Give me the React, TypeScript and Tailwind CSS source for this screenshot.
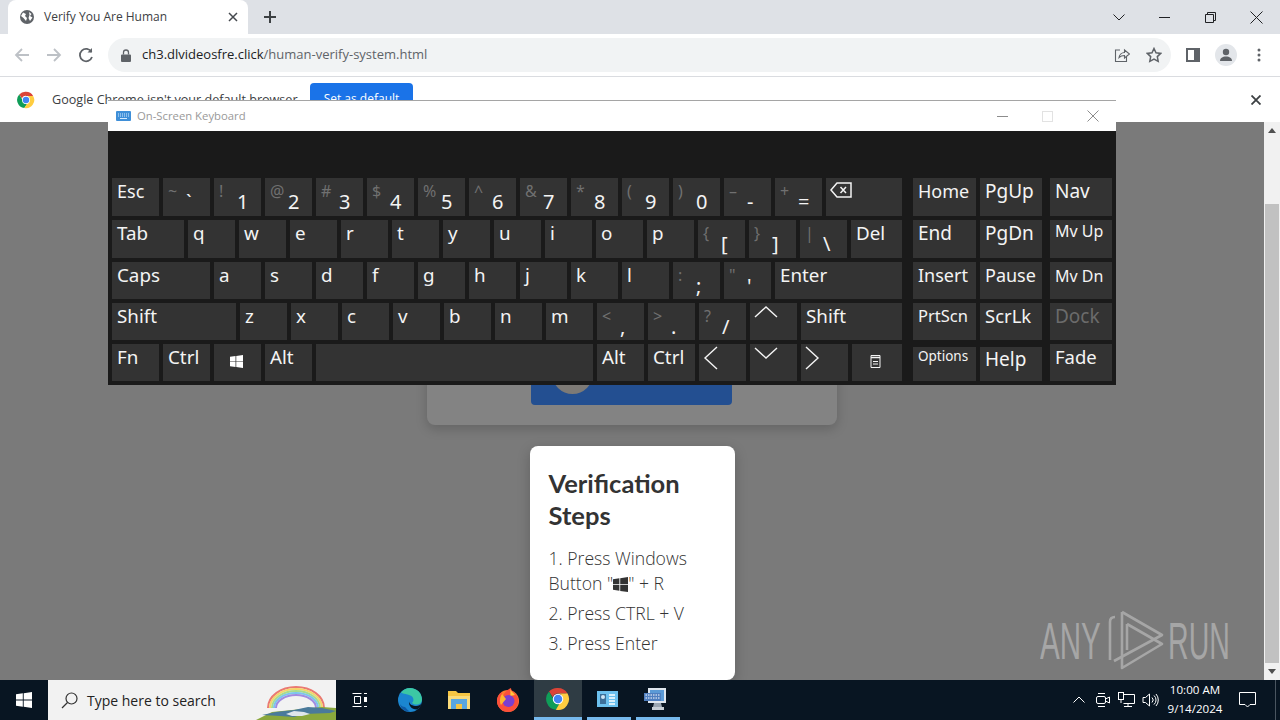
import React from 'react';

const keyFont = "font-['Noto_Sans',sans-serif]";

const WinLogo = ({ className }: { className: string }) => (
  <svg viewBox="0 0 16 16" className={className} fill="currentColor">
    <path d="M0 2.300 6.800 1.300v6.300H0zM7.700 1.200 16 0v7.600H7.700zM0 8.400h6.800v6.300L0 13.700zM7.700 8.400H16V16l-8.300-1.200z" />
  </svg>
);

const ChromeLogo = ({ size }: { size: number }) => (
  <svg width={size} height={size} viewBox="0 0 48 48">
    <path fill="#db4437" d="M24 2a22 22 0 0 1 19 11H24a11 11 0 0 0-10.500 7.500L6 9a22 22 0 0 1 18-7z" />
    <path fill="#0f9d58" d="M6 9l9.500 16.500A11 11 0 0 0 27 34.600L19.600 45.600A22 22 0 0 1 6 9z" />
    <path fill="#ffcd40" d="M43 13a22 22 0 0 1-23.400 32.600L29.500 29A11 11 0 0 0 31 16z" />
    <path fill="#ffcd40" d="M43 13H24a11 11 0 0 1 7 3l-1.500 13z" />
    <circle cx="24" cy="24" r="10.500" fill="#fff" />
    <circle cx="24" cy="24" r="8.500" fill="#4285f4" />
  </svg>
);

type KeyProps = {
  w: string;
  label?: string;
  sub?: string;
  h?: string;
  text?: string;
  dim?: boolean;
  children?: React.ReactNode;
};

const Key = ({ w, label, sub, h = 'h-full', text = 'text-[18.8px] leading-[26px]', dim, children }: KeyProps) => (
  <div className={`${w} ${h} bg-[#333333] shrink-0 pl-[5px] ${dim ? 'text-[#6b6b6b]' : 'text-[#f4f4f4]'}`}>
    {sub !== undefined ? (
      <div className="flex flex-col">
        <span className="text-[16px] leading-5 pt-[3px] text-[#707070]">{sub}</span>
        <span className="text-[20px] leading-6 pl-[18px] -mt-[11px]">{label}</span>
      </div>
    ) : children ? (
      children
    ) : (
      <span className={`block whitespace-nowrap ${text}`}>{label}</span>
    )}
  </div>
);

const Chevron = ({ d, className }: { d: string; className: string }) => (
  <svg viewBox="0 0 24 24" className={className} fill="none" stroke="#f4f4f4" strokeWidth="1.400">
    <path d={d} />
  </svg>
);

const numberRow = [
  ['~', '`'], ['!', '1'], ['@', '2'], ['#', '3'], ['$', '4'], ['%', '5'], ['^', '6'],
  ['&', '7'], ['*', '8'], ['(', '9'], [')', '0'], ['–', '-'], ['+', '='],
];

const OnScreenKeyboard = () => (
  <div className={`absolute left-[108px] top-[100px] w-[1008px] h-[285px] flex flex-col ${keyFont}`}>
    {/* title bar */}
    <div className="h-[31px] bg-white border-t border-[#a5a5a5] flex items-center pl-2 pr-[17px] shrink-0">
      <svg width="15" height="10" viewBox="0 0 15 10" className="shrink-0">
        <rect width="15" height="10" rx="1" fill="#3f8fd8" />
        <path d="M2 3h11M2 5h11" stroke="#d7ecff" strokeWidth="1" strokeDasharray="1 1" />
        <path d="M4 7.500h7" stroke="#d7ecff" strokeWidth="1" />
      </svg>
      <span className="ml-[6px] text-[11.3px] text-[#999999] font-['Open_Sans',sans-serif]">On-Screen Keyboard</span>
      <div className="ml-auto flex items-center gap-[34px]">
        <svg width="11" height="11" viewBox="0 0 11 11" stroke="#8c8c8c" fill="none"><path d="M0 5.500h11" /></svg>
        <svg width="11" height="11" viewBox="0 0 11 11" stroke="#e2e2e2" fill="none"><rect x=".5" y=".5" width="10" height="10" /></svg>
        <svg width="12" height="12" viewBox="0 0 12 12" stroke="#8c8c8c" fill="none"><path d="M.5.500l11 11M11.500.500l-11 11" /></svg>
      </div>
    </div>

    <div className="flex-1 bg-[#1a1a1a] pl-1 pt-[47px] flex gap-[11px]">
      {/* main block */}
      <div className="w-[790px] flex flex-col gap-[4px]">
        <div className="h-[38px] flex gap-1">
          <Key w="w-[47px]" label="Esc" text="text-[18px] leading-[26px]" />
          {numberRow.map(([s, l]) => (
            <Key key={l} w="w-[47px]" sub={s} label={l} />
          ))}
          <Key w="w-[76px]">
            <svg width="22" height="16" viewBox="0 0 22 16" fill="none" stroke="#f4f4f4" strokeWidth="1.500" className="mt-[4px] -ml-[1px]">
              <path d="M7 1h14v14H7L1 8z" />
              <path d="M10.500 5l5.500 6M16 5l-5.500 6" />
            </svg>
          </Key>
        </div>
        <div className="h-[38px] flex gap-1">
          <Key w="w-[72px]" label="Tab" />
          {'qwertyuiop'.split('').map((c) => (
            <Key key={c} w="w-[47px]" label={c} />
          ))}
          <Key w="w-[47px]" sub="{" label="[" />
          <Key w="w-[47px]" sub="}" label="]" />
          <Key w="w-[47px]" sub="|" label="\" />
          <Key w="w-[51px]" label="Del" />
        </div>
        <div className="h-[37px] flex gap-1">
          <Key w="w-[98px]" label="Caps" />
          {'asdfghjkl'.split('').map((c) => (
            <Key key={c} w="w-[47px]" label={c} />
          ))}
          <Key w="w-[47px]" sub=":" label=";" />
          <Key w="w-[47px]" sub={'"'} label="'" />
          <Key w="w-[127px]" label="Enter" />
        </div>
        <div className="h-[37px] flex gap-1">
          <Key w="w-[124px]" label="Shift" />
          {'zxcvbnm'.split('').map((c) => (
            <Key key={c} w="w-[47px]" label={c} />
          ))}
          <Key w="w-[47px]" sub="<" label="," />
          <Key w="w-[47px]" sub=">" label="." />
          <Key w="w-[47px]" sub="?" label="/" />
          <Key w="w-[47px]">
            <Chevron d="M1 13 12 3l11 10" className="w-6 h-6 mt-[1px] -ml-[1px]" />
          </Key>
          <Key w="w-[101px]" label="Shift" />
        </div>
        <div className="h-[37px] flex gap-1">
          <Key w="w-[47px]" label="Fn" />
          <Key w="w-[47px]" label="Ctrl" />
          <Key w="w-[47px]">
            <WinLogo className="w-[13px] h-[13px] ml-[11px] mt-[11px] text-white" />
          </Key>
          <Key w="w-[47px]" label="Alt" />
          <Key w="w-[277px]" />
          <Key w="w-[47px]" label="Alt" />
          <Key w="w-[47px]" label="Ctrl" />
          <Key w="w-[47px]">
            <Chevron d="M16 1 4 12l12 11" className="w-6 h-6 mt-[2px] -ml-[3px]" />
          </Key>
          <Key w="w-[47px]">
            <Chevron d="M1 4l11 10L23 4" className="w-6 h-6 mt-0 -ml-[1px]" />
          </Key>
          <Key w="w-[47px]">
            <Chevron d="M5 1l12 11L5 23" className="w-6 h-6 mt-[2px] -ml-[5px]" />
          </Key>
          <Key w="w-[50px]">
            <svg width="11" height="13" viewBox="0 0 11 13" fill="none" stroke="#f4f4f4" className="ml-[13px] mt-[11px]">
              <path d="M1 .500h9v12H1z" />
              <path d="M1 2.500h9" strokeWidth="1.500" />
              <path d="M3 6.500h5M3 9h5" />
            </svg>
          </Key>
        </div>
      </div>

      {/* nav block */}
      <div className="flex gap-1">
        <div className="w-[63px] flex flex-col gap-[4px]">
          <div className="h-[38px]"><Key w="w-full" label="Home" text="text-[18px] leading-[26px]" /></div>
          <div className="h-[38px]"><Key w="w-full" label="End" text="text-[19px] leading-[26px]" /></div>
          <div className="h-[37px]"><Key w="w-full" label="Insert" text="text-[18px] leading-[26px]" /></div>
          <div className="h-[37px]"><Key w="w-full" label="PrtScn" text="text-[16.5px] leading-[26px]" /></div>
          <div className="h-[37px] flex flex-col justify-end"><Key w="w-full" h="h-[34px]" label="Options" text="text-[13.5px] leading-[18px]" /></div>
        </div>
        <div className="w-[62px] flex flex-col gap-[4px]">
          <div className="h-[38px]"><Key w="w-full" label="PgUp" text="text-[19px] leading-[26px]" /></div>
          <div className="h-[38px]"><Key w="w-full" label="PgDn" text="text-[19px] leading-[26px]" /></div>
          <div className="h-[37px]"><Key w="w-full" label="Pause" text="text-[18px] leading-[26px]" /></div>
          <div className="h-[37px]"><Key w="w-full" label="ScrLk" text="text-[18.5px] leading-[26px]" /></div>
          <div className="h-[37px] flex flex-col justify-end"><Key w="w-full" h="h-[34px]" label="Help" text="text-[19px] leading-[25px]" /></div>
        </div>
        <div className="w-[62px] flex flex-col gap-[4px] ml-1">
          <div className="h-[38px]"><Key w="w-full" label="Nav" text="text-[19px] leading-[26px]" /></div>
          <div className="h-[38px]"><Key w="w-full" label="Mv Up" text="text-[16px] leading-[22px]" /></div>
          <div className="h-[37px]"><Key w="w-full" label="Mv Dn" text="text-[16px] leading-[28px]" /></div>
          <div className="h-[37px]"><Key w="w-full" label="Dock" dim text="text-[19px] leading-[26px]" /></div>
          <div className="h-[37px]"><Key w="w-full" label="Fade" text="text-[18.5px] leading-[26px]" /></div>
        </div>
      </div>
    </div>
  </div>
);

const TabStrip = () => (
  <div className="h-[34px] bg-[#dee1e6] flex items-end shrink-0 relative">
    <div className="ml-2 w-[240px] h-[34px] bg-white rounded-t-lg flex items-center pl-[12px] pr-[10px]">
      <svg width="14" height="14" viewBox="0 0 14 14" className="shrink-0">
        <circle cx="7" cy="7" r="7" fill="#5f6368" />
        <path d="M3 2.500 6 4 5 6 7 8 6 11 3.500 8 1 6zM9 2l2.500 2L10 6l2.500 1.500L10 11 8.500 8 9.500 5z" fill="#fff" />
      </svg>
      <span className="ml-[10px] text-[12px] text-[#3c4043] font-['Open_Sans',sans-serif]">Verify You Are Human</span>
      <svg width="10" height="10" viewBox="0 0 10 10" className="ml-auto" stroke="#45494e" strokeWidth="1.500"><path d="M1 1l8 8M9 1l-8 8" /></svg>
    </div>
    <svg width="12" height="12" viewBox="0 0 12 12" className="ml-4 mb-[11px]" stroke="#3c4043" strokeWidth="2"><path d="M6 0v12M0 6h12" /></svg>
    <div className="ml-auto flex items-center h-full pr-[17px] gap-[34px]">
      <svg width="12" height="12" viewBox="0 0 12 12" fill="none" stroke="#202124"><path d="M.5 3.500 6 9l5.500-5.500" /></svg>
      <svg width="11" height="11" viewBox="0 0 11 11" fill="none" stroke="#202124"><path d="M0 5.500h11" /></svg>
      <svg width="11" height="11" viewBox="0 0 11 11" fill="none" stroke="#202124" className="ml-[1px]"><path d="M.5 2.500h8v8h-8zM2.500 2.500v-2h8v8h-2" /></svg>
      <svg width="13" height="13" viewBox="0 0 13 13" fill="none" stroke="#202124"><path d="M.5.500l12 12M12.500.500l-12 12" /></svg>
    </div>
  </div>
);

const Toolbar = () => (
  <div className="h-[43px] bg-white border-b border-[#dadce0] flex items-center shrink-0">
    <svg width="16" height="16" viewBox="0 0 16 16" fill="none" stroke="#bdc1c6" strokeWidth="1.800" className="ml-[14px]"><path d="M15 8H2M8 2 2 8l6 6" /></svg>
    <svg width="16" height="16" viewBox="0 0 16 16" fill="none" stroke="#bdc1c6" strokeWidth="1.800" className="ml-[16px]"><path d="M1 8h13M8 2l6 6-6 6" /></svg>
    <svg width="16" height="16" viewBox="0 0 16 16" fill="none" stroke="#5f6368" strokeWidth="1.800" className="ml-[16px]"><path d="M13.500 5A6.200 6.200 0 1 0 14 10" /><path d="M14 1v4.500H9.500" fill="#5f6368" stroke="none" /></svg>
    <div className="ml-[14px] w-[1063px] h-[34px] bg-[#f1f3f4] rounded-full flex items-center pl-[13px] pr-[9px]">
      <svg width="10" height="13" viewBox="0 0 10 13" className="shrink-0"><path d="M1 5.500h8a1 1 0 0 1 1 1V12a1 1 0 0 1-1 1H1a1 1 0 0 1-1-1V6.500a1 1 0 0 1 1-1z" fill="#5f6368" /><path d="M2.500 5.500V3.500a2.500 2.500 0 0 1 5 0v2" fill="none" stroke="#5f6368" strokeWidth="1.300" /></svg>
      <span className="ml-[11px] text-[13px] text-[#202124] font-['Open_Sans',sans-serif]">
        ch3.dlvideosfre.click<span className="text-[#5f6368]">/human-verify-system.html</span>
      </span>
      <svg width="16" height="16" viewBox="0 0 16 16" fill="none" stroke="#5f6368" strokeWidth="1.100" className="ml-auto"><path d="M6 3H1.500v11.500h11V10" /><path d="M5 10.500C5.500 7.500 8 5.500 10.500 5.500V3l5 4-5 4V8.500C8.500 8.500 6.500 9 5 10.500z" /></svg>
      <svg width="16" height="16" viewBox="0 0 16 16" fill="none" stroke="#5f6368" strokeWidth="1.500" className="ml-[16px]"><path d="m8 1.500 2 4.300 4.700.6-3.400 3.200.9 4.700L8 12l-4.200 2.300.9-4.700L1.300 6.400 6 5.800z" /></svg>
    </div>
    <svg width="14" height="14" viewBox="0 0 14 14" className="ml-[15px]"><path d="M0 0h14v14H0zM2 2v10h6V2z" fill="#5f6368" fillRule="evenodd" /></svg>
    <div className="ml-[15px] w-[22px] h-[22px] rounded-full bg-[#e3e6ea] flex items-center justify-center">
      <svg width="14" height="14" viewBox="0 0 14 14" fill="#5f6368"><circle cx="7" cy="4" r="3.200" /><path d="M1 13c0-3 2.500-4.500 6-4.500s6 1.500 6 4.500z" /></svg>
    </div>
    <svg width="4" height="14" viewBox="0 0 4 14" fill="#5f6368" className="ml-[20px]"><circle cx="2" cy="2" r="1.500" /><circle cx="2" cy="7" r="1.500" /><circle cx="2" cy="12" r="1.500" /></svg>
  </div>
);

const InfoBar = () => (
  <div className="h-[45px] bg-white flex items-center shrink-0 pl-[17px] pr-[19px] font-['Open_Sans',sans-serif]">
    <ChromeLogo size={18} />
    <span className="ml-[17px] mt-[1px] w-[246px] whitespace-nowrap text-[12.6px] text-[#3c4043]">Google Chrome isn't your default browser</span>
    <div className="ml-[12px] w-[103px] h-[32px] bg-[#1a73e8] rounded text-white text-[12px] flex items-center justify-center self-start mt-[6px]">Set as default</div>
    <svg width="10" height="10" viewBox="0 0 10 10" className="ml-auto" stroke="#3c4043" strokeWidth="1.800"><path d="M.5.500l9 9M9.500.500l-9 9" /></svg>
  </div>
);

const VerifyPage = () => (
  <div className="flex-1 flex min-h-0">
    <div className="flex-1 bg-[#7a7a7a] flex flex-col items-center relative overflow-hidden">
      <div className="w-[410px] h-[303px] bg-[#838383] rounded-b-lg shadow-[0_4px_12px_rgba(0,0,0,0.18)] flex flex-col justify-end items-center pb-5 shrink-0">
        <div className="w-[201px] h-[60px] bg-[#234f91] rounded-b -ml-[1px]">
          <div className="w-[41px] h-[49px] bg-[#7d7a76] rounded-b-full ml-[21px]" />
        </div>
      </div>
      <div className="w-[205px] h-[234px] mt-[21px] shrink-0 bg-white rounded-lg shadow-[0_4px_14px_rgba(0,0,0,0.2)] px-[19px] pt-[21px] font-['Open_Sans',sans-serif] text-[#333]">
        <h2 className="text-[25.5px] leading-8 font-bold font-['Lato',sans-serif]">Verification Steps</h2>
        <ol className="mt-[15px] text-[17.6px] font-light">
          <li className="leading-[25px]">
            1. Press Windows Button "<WinLogo className="inline w-[15px] h-[15px] align-[-2px] text-[#333]" />" + R
          </li>
          <li className="leading-[25px] mt-[5px]">2. Press CTRL + V</li>
          <li className="leading-[25px] mt-[5px]">3. Press Enter</li>
        </ol>
      </div>
      {/* watermark */}
      <div className="absolute left-[1040px] top-[488px] flex items-center text-[#a6a6a6] font-['Liberation_Sans',sans-serif]">
        <span className="text-[51px] leading-none w-[60px] origin-left scale-x-[0.58] block">ANY</span>
        <svg width="70" height="62" viewBox="0 0 70 62" fill="none" stroke="#a6a6a6" strokeWidth="2.600" strokeLinejoin="round" className="-mr-[2px]">
          <g transform="translate(0,-10)">
            <path d="M22 12 62 35 14 61" />
            <path d="M27 24 62 44 22 68V12" />
            <path d="M27 24V50" />
            <path d="M10 60V22Q10 17 15 17" />
          </g>
        </svg>
        <span className="text-[51px] leading-none w-[62px] origin-left scale-x-[0.56] block">RUN</span>
      </div>
    </div>
    {/* scrollbar */}
    <div className="w-4 bg-[#f1f1f1] flex flex-col items-center shrink-0">
      <div className="h-[16px] flex items-center justify-center"><div className="w-0 h-0 border-x-4 border-x-transparent border-b-[5px] border-b-[#505050]" /></div>
      <div className="h-[66px]" />
      <div className="w-[14px] flex-1 bg-[#c1c1c1]" />
      <div className="h-[17px] flex items-center justify-center"><div className="w-0 h-0 border-x-4 border-x-transparent border-t-[5px] border-t-[#505050]" /></div>
    </div>
  </div>
);

const Taskbar = () => (
  <div className="h-10 bg-[#081522] flex items-stretch shrink-0 font-['Open_Sans',sans-serif]">
    <div className="w-[48px] flex items-center justify-center">
      <WinLogo className="w-[16px] h-[16px] text-white" />
    </div>
    <div className="w-[288px] bg-[#f2f2f2] flex items-center pl-[13px] relative overflow-hidden">
      <svg width="17" height="17" viewBox="0 0 17 17" fill="none" stroke="#333" strokeWidth="1.200"><circle cx="10.500" cy="6.500" r="5.500" /><path d="M6.500 10.500 1 16" /></svg>
      <span className="ml-[9px] text-[14px] text-[#222]">Type here to search</span>
      <svg width="80" height="40" viewBox="0 0 80 40" fill="none" className="absolute right-0 top-0">
        <path d="M12 28A28 21 0 0 1 68 28" stroke="#ea7a72" strokeWidth="2" />
        <path d="M14 28A26 19 0 0 1 66 28" stroke="#f4d56a" strokeWidth="2" />
        <path d="M16 28A24 17 0 0 1 64 28" stroke="#a8dc8c" strokeWidth="2" />
        <path d="M18 28A22 15 0 0 1 62 28" stroke="#7cc4ec" strokeWidth="2" />
        <path d="M20 28A20 13 0 0 1 60 28" stroke="#a18be0" strokeWidth="2" />
        <path d="M0 40l16-8 50-5 14 1v12z" fill="#8aa83c" />
        <path d="M6 35l14-3 18-2 14-3 14 1 14 3-6 2-26 1-10 3-14-1z" fill="#4a7a9a" />
        <path d="M30 34l8-3 10 1 6 2-8 2-10 0z" fill="#dfe6ea" />
      </svg>
    </div>
    <div className="w-[48px] flex items-center justify-center">
      <svg width="16" height="16" viewBox="0 0 16 16" fill="none" stroke="#fff"><path d="M.5 1.500h9M.5 14.500h9M2.500 4.500h6v7h-6zM12 1.500h3M12 14.500h3" /><rect x="12" y="5" width="3" height="5" fill="#fff" stroke="none" /></svg>
    </div>
    <div className="w-[52px] flex items-center justify-center">
      <svg width="24" height="24" viewBox="0 0 24 24">
        <circle cx="12" cy="12" r="12" fill="#1b86d0" />
        <path d="M3 4.500C5 1.800 8.400 0 12 0c6.800 0 12 5 12 11.500 0 3-2.500 5-5.500 5-2.500 0-4-.8-4.500-1.800 2-1.200 2.200-5-1-7C9.500 6 5.500 6 3 4.500z" fill="#3cc8a4" />
        <path d="M23.500 15.500c-1 1.500-3 2.500-5 2.500-4 0-7-1.500-7.500-4.500-.5 3.500 2 8 8 8 2.500-1.500 4-3.500 4.500-6z" fill="#081522" />
        <path d="M12 23.500C7 24 3 21 2 16c1 2 3 3 5 3 2 2 3 3.500 5 4.500z" fill="#0f5aa5" />
      </svg>
    </div>
    <div className="w-[46px] flex items-center justify-center">
      <svg width="22" height="20" viewBox="0 0 22 20">
        <path d="M0 1h8l2 2h12v15H0z" fill="#f5c543" />
        <path d="M0 6h22v13H0z" fill="#fadb7a" />
        <path d="M3 9h16v10H3z" fill="#58a6e0" />
        <path d="M8 14h6v5H8z" fill="#f5c543" />
      </svg>
    </div>
    <div className="w-[52px] flex items-center justify-center">
      <svg width="24" height="24" viewBox="0 0 24 24">
        <circle cx="12" cy="13" r="11" fill="#ff7a2f" />
        <path d="M12 24a11 11 0 0 1-11-11C1 8 4 5 6 4c-.5 2 0 3 1 4 1-3 4-6 8-8 0 3 3 4 6 8 2 3 2 8-1 12a11 11 0 0 1-8 4z" fill="#fb4f3a" />
        <path d="M14 0c0 3 3 4 5 7l-5 1c1-3 0-5 0-8z" fill="#ffc83a" />
        <circle cx="12.500" cy="13" r="6" fill="#7a3fd0" />
        <path d="M6 6c-2 3-3 7-1 11l5-6z" fill="#ffb52e" />
      </svg>
    </div>
    <div className="w-[48px] bg-[#2f3c44] border-b-[3px] border-[#76b9ed] flex items-center justify-center">
      <ChromeLogo size={24} />
    </div>
    <div className="w-[44px] ml-[5px] border-b-[3px] border-[#76b9ed] flex items-center justify-center pr-[4px]">
      <svg width="21" height="16" viewBox="0 0 21 16">
        <path d="M0 0h21v16H0z" fill="#6cc0ee" />
        <path d="M3 3h6v10H3z" fill="#3c6f9a" />
        <circle cx="6" cy="6" r="2" fill="#cfe6f5" />
        <path d="M12 4h6M12 7h6M12 10h6M12 13h6" stroke="#fff" strokeWidth="1.300" />
      </svg>
    </div>
    <div className="w-[44px] ml-[5px] border-b-[3px] border-[#76b9ed] flex items-center justify-center pr-[4px]">
      <svg width="24" height="24" viewBox="0 0 24 24">
        <path d="M4 1h18v15H4z" fill="#dfe6ee" />
        <path d="M6 3h14v11H6z" fill="#5b9ad6" />
        <path d="M0 6h17v8H0z" fill="#4f7fc0" />
        <path d="M1.500 8h14M1.500 11h14" stroke="#fff" strokeDasharray="1.500 1" />
        <path d="M10 16h7l1 4h-9z" fill="#9aa5b1" />
        <path d="M8 20h12v3H8z" fill="#c7ced6" />
      </svg>
    </div>
    {/* tray */}
    <div className="ml-auto flex items-center text-white">
      <svg width="14" height="14" viewBox="0 0 14 14" fill="none" stroke="#fff"><path d="M1.500 9.500 7 4l5.500 5.500" /></svg>
      <svg width="16" height="16" viewBox="0 0 16 16" fill="none" stroke="#fff" className="ml-[9px]"><path d="M3 1.500h7M3 14.500h7" /><rect x="1.500" y="4.500" width="9" height="7" rx="1.500" /><path d="M10.500 7 14.500 5v6l-4-2" /></svg>
      <svg width="17" height="16" viewBox="0 0 17 16" fill="none" stroke="#fff" className="ml-[7px]"><path d="M5.500 2.500h11v9h-11" /><rect x=".5" y=".5" width="5" height="7" /><path d="M3 8v3M6 14.500h8M10 11.500v3" /></svg>
      <svg width="17" height="16" viewBox="0 0 17 16" fill="none" stroke="#fff" className="ml-[7px]"><path d="M1 5.500h2.500L7.500 2v12l-4-3.500H1z" /><path d="M10 5.500a3.500 3.500 0 0 1 0 5M12 3.500a6 6 0 0 1 0 9M14 2a9 9 0 0 1 0 12" /></svg>
      <div className="w-[60px] ml-[6px] -mt-[2px] flex flex-col items-center text-[11.6px] leading-[19px] whitespace-nowrap">
        <span>10:00 AM</span>
        <span>9/14/2024</span>
      </div>
      <svg width="17" height="16" viewBox="0 0 17 16" fill="none" stroke="#fff" className="ml-[14px] mr-[19px]"><path d="M.5.500h16v12h-5.500l-2.500 2.500-2.500-2.500H.5z" /></svg>
      <div className="w-px h-full bg-[#4a5560] mr-[4px]" />
    </div>
  </div>
);

export default function App() {
  return (
    <div className="w-[1280px] h-[720px] relative overflow-hidden flex flex-col bg-white">
      <TabStrip />
      <Toolbar />
      <InfoBar />
      <VerifyPage />
      <Taskbar />
      <OnScreenKeyboard />
    </div>
  );
}
